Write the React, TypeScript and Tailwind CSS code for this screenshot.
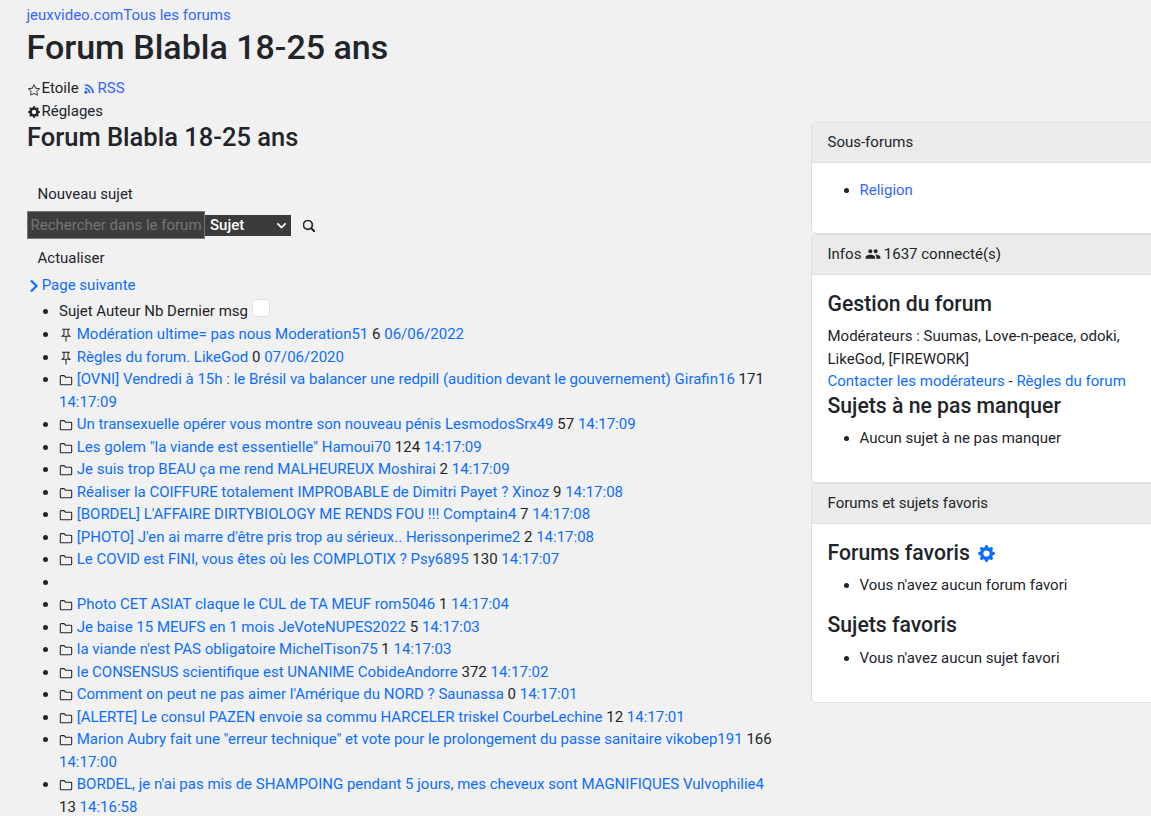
const BLUE = 'text-[#0d6efd]';

function Star() {
  return (
    <svg width="12" height="12" viewBox="0 0 16 16" fill="currentColor" className="inline-block align-[-3px] mx-[1.5px]">
      <path d="M2.866 14.85c-.078.444.36.791.746.593l4.39-2.256 4.389 2.256c.386.198.824-.149.746-.592l-.83-4.73 3.522-3.356c.33-.314.16-.888-.282-.95l-4.898-.696L8.465.792a.513.513 0 0 0-.927 0L5.354 5.12l-4.898.696c-.441.062-.612.636-.283.95l3.523 3.356-.83 4.73zm4.905-2.767-3.686 1.894.694-3.957a.565.565 0 0 0-.163-.505L1.71 6.745l4.052-.576a.525.525 0 0 0 .393-.288L8 2.223l1.847 3.658a.525.525 0 0 0 .393.288l4.052.575-2.906 2.77a.565.565 0 0 0-.163.506l.694 3.957-3.686-1.894a.503.503 0 0 0-.461 0z" />
    </svg>
  );
}

function Gear({ size = 12, cls = 'mx-[1.5px] align-[-2px]' }: { size?: number; cls?: string }) {
  return (
    <svg width={size} height={size} viewBox="0 0 16 16" fill="currentColor" className={`inline-block ${cls}`}>
      <path d="M9.405 1.05c-.413-1.4-2.397-1.4-2.81 0l-.1.34a1.464 1.464 0 0 1-2.105.872l-.31-.17c-1.283-.698-2.686.705-1.987 1.987l.169.311c.446.82.023 1.841-.872 2.105l-.34.1c-1.4.413-1.4 2.397 0 2.81l.34.1a1.464 1.464 0 0 1 .872 2.105l-.17.31c-.698 1.283.705 2.686 1.987 1.987l.311-.169a1.464 1.464 0 0 1 2.105.872l.1.34c.413 1.4 2.397 1.4 2.81 0l.1-.34a1.464 1.464 0 0 1 2.105-.872l.31.17c1.283.698 2.686-.705 1.987-1.987l-.169-.311a1.464 1.464 0 0 1 .872-2.105l.34-.1c1.4-.413 1.4-2.397 0-2.81l-.34-.1a1.464 1.464 0 0 1-.872-2.105l.17-.31c.698-1.283-.705-2.686-1.987-1.987l-.311.169a1.464 1.464 0 0 1-2.105-.872l-.1-.34zM8 10.93a2.929 2.929 0 1 1 0-5.86 2.929 2.929 0 0 1 0 5.858z" />
    </svg>
  );
}

function Rss() {
  return (
    <svg width="10" height="10" viewBox="0 0 16 16" fill="none" stroke="currentColor" strokeWidth="2.8" className="inline-block align-[-1.5px] ml-[1.5px]">
      <path d="M1.500 7a7.500 7.500 0 0 1 7.500 7.500" />
      <path d="M1.500 1.500a13 13 0 0 1 13 13" />
      <circle cx="3" cy="13" r="2.500" fill="currentColor" stroke="none" />
    </svg>
  );
}

function Folder() {
  return (
    <svg width="14" height="14" viewBox="0 0 16 16" fill="none" stroke="currentColor" strokeWidth="1.2" className="inline-block align-[-3px] text-[#212529]">
      <path d="M1.500 4a1 1 0 0 1 1-1h3.300l1.600 1.800h6.100a1 1 0 0 1 1 1v6.700a1 1 0 0 1-1 1H2.500a1 1 0 0 1-1-1z" />
    </svg>
  );
}

function Pin() {
  return (
    <svg width="14" height="14" viewBox="0 0 16 16" fill="none" stroke="currentColor" strokeWidth="1.200" className="inline-block align-[-3px] text-[#212529]">
      <path d="M3.500 1.500h9M5.700 1.500v6L3.500 9.500h9l-2.200-2v-6M8 9.500v6" />
    </svg>
  );
}

function Search() {
  return (
    <svg width="12" height="12" viewBox="0 0 16 16" fill="currentColor" className="inline-block text-[#212529]">
      <path d="M11.742 10.344a6.500 6.500 0 1 0-1.397 1.398h-.001c.030.040.062.078.098.115l3.850 3.850a1 1 0 0 0 1.415-1.414l-3.850-3.850a1.007 1.007 0 0 0-.115-.100zM12 6.500a5.500 5.500 0 1 1-11 0 5.500 5.500 0 0 1 11 0z" stroke="currentColor" strokeWidth="1.300" />
    </svg>
  );
}

function People() {
  return (
    <svg width="16" height="16" viewBox="0 0 24 24" fill="currentColor" className="inline-block align-[-3px] mr-[-1px]">
      <path d="M16 11c1.660 0 2.990-1.340 2.990-3S17.660 5 16 5c-1.660 0-3 1.340-3 3s1.340 3 3 3zm-8 0c1.660 0 2.990-1.340 2.990-3S9.660 5 8 5C6.340 5 5 6.340 5 8s1.340 3 3 3zm0 2c-2.330 0-7 1.170-7 3.500V19h14v-2.500c0-2.330-4.670-3.500-7-3.500zm8 0c-.290 0-.620.020-.970.050 1.160.840 1.970 1.970 1.970 3.450V19h6v-2.500c0-2.330-4.670-3.500-7-3.500z" />
    </svg>
  );
}

function Chevron() {
  return (
    <svg width="10" height="14" viewBox="0 0 10 14" fill="none" stroke="currentColor" strokeWidth="2.200" className="inline-block align-[-3px]">
      <path d="M3 1.500 8.500 7 3 12.500" />
    </svg>
  );
}

type Topic = [string, string, string, string];

const topics: (Topic | null)[] = [
  ['[OVNI] Vendredi à 15h : le Brésil va balancer une redpill (audition devant le gouvernement)', 'Girafin16', '171', '14:17:09'],
  ['Un transexuelle opérer vous montre son nouveau pénis', 'LesmodosSrx49', '57', '14:17:09'],
  ['Les golem "la viande est essentielle"', 'Hamoui70', '124', '14:17:09'],
  ['Je suis trop BEAU ça me rend MALHEUREUX', 'Moshirai', '2', '14:17:09'],
  ['Réaliser la COIFFURE totalement IMPROBABLE de Dimitri Payet ?', 'Xinoz', '9', '14:17:08'],
  ['[BORDEL] L\'AFFAIRE DIRTYBIOLOGY ME RENDS FOU !!!', 'Comptain4', '7', '14:17:08'],
  ['[PHOTO] J\'en ai marre d\'être pris trop au sérieux..', 'Herissonperime2', '2', '14:17:08'],
  ['Le COVID est FINI, vous êtes où les COMPLOTIX ?', 'Psy6895', '130', '14:17:07'],
  null,
  ['Photo CET ASIAT claque le CUL de TA MEUF', 'rom5046', '1', '14:17:04'],
  ['Je baise 15 MEUFS en 1 mois', 'JeVoteNUPES2022', '5', '14:17:03'],
  ['la viande n\'est PAS obligatoire', 'MichelTison75', '1', '14:17:03'],
  ['le CONSENSUS scientifique est UNANIME', 'CobideAndorre', '372', '14:17:02'],
  ['Comment on peut ne pas aimer l\'Amérique du NORD ?', 'Saunassa', '0', '14:17:01'],
  ['[ALERTE] Le consul PAZEN envoie sa commu HARCELER triskel', 'CourbeLechine', '12', '14:17:01'],
  ['Marion Aubry fait une "erreur technique" et vote pour le prolongement du passe sanitaire', 'vikobep191', '166', '14:17:00'],
  ['BORDEL, je n\'ai pas mis de SHAMPOING pendant 5 jours, mes cheveux sont MAGNIFIQUES', 'Vulvophilie4', '13', '14:16:58'],
];

function Row({ icon, t }: { icon: React.ReactNode; t: Topic }) {
  return (
    <li>
      {icon} <a className={BLUE}>{t[0]}</a> <a className={BLUE}>{t[1]}</a> {t[2]} <a className={BLUE}>{t[3]}</a>
    </li>
  );
}

function Card({ title, children }: { title: React.ReactNode; children: React.ReactNode }) {
  return (
    <div className="bg-white border border-[#dfdfdf] rounded-[5px] overflow-hidden">
      <div className="h-[40px] px-[15.5px] flex items-center bg-[#ebebeb] border-b border-[#dfdfdf] text-[#212529]">
        <span>{title}</span>
      </div>
      <div className="px-[15.5px] pt-4 pb-[17px]">{children}</div>
    </div>
  );
}

export default function App() {
  return (
    <div className="h-[816px] w-[1151px] overflow-hidden bg-[#f1f1f1] text-[#212529] text-[15px] leading-[22.5px] font-['Roboto',sans-serif]">
      <div className="pl-[26.5px] pt-[4px]">
        <div className="text-[#3366ff]"><a>jeuxvideo.com</a><a>Tous les forums</a></div>
        <h1 className="text-[34px] leading-[40px] font-medium mb-[10px]">Forum Blabla 18-25 ans</h1>
        <div className="h-[23.500px]"><Star /><span>Etoile</span> <a className="text-[#3366ff]"><Rss /> RSS</a></div>
        <div className="h-[22.500px]"><Gear /><span>Réglages</span></div>
      </div>
      <div className="flex gap-[30px] pl-[27px]">
        <main className="w-[754px] shrink-0">
          <h2 className="text-[25.5px] leading-[29px] font-medium mb-[24px]">Forum Blabla 18-25 ans</h2>
          <div className="px-[10.5px] py-[7px] h-[35px]">Nouveau sujet</div>
          <div className="flex items-center h-[28px]">
            <input readOnly placeholder="Rechercher dans le forum" className="w-[178px] h-[28px] bg-[#3d3d3d] border border-[#767676] px-[2.5px] text-[15px] text-white placeholder:text-[#757575]" />
            <div className="w-[86px] h-[21px] bg-[#3b3b3b] text-white font-medium pl-[5px] flex items-center justify-between pr-[4px] mt-[1px]">
              <span>Sujet</span>
              <svg width="11" height="11" viewBox="0 0 16 16" fill="none" stroke="currentColor" strokeWidth="2.500"><path d="M2 5l6 6 6-6" /></svg>
            </div>
            <span className="ml-[12px] mt-[3px] flex"><Search /></span>
          </div>
          <div className="px-[10.5px] py-[8px] h-[35px]">Actualiser</div>
          <div className={`${BLUE} pl-[1px]`}><Chevron /> <a>Page suivante</a></div>
          <ul className="list-disc pl-[32px] mt-[1px]">
            <li className="h-[26px] pt-[1.5px]">
              Sujet Auteur Nb Dernier msg <span className="inline-block w-[18px] h-[18px] bg-white border border-[#dfdfdf] rounded-[4px] align-[-1px]" />
            </li>
            <Row icon={<Pin />} t={['Modération ultime= pas nous', 'Moderation51', '6', '06/06/2022']} />
            <Row icon={<Pin />} t={['Règles du forum.', 'LikeGod', '0', '07/06/2020']} />
            {topics.map((t, i) => t ? <Row key={i} icon={<Folder />} t={t} /> : <li key={i} className="h-[22.500px]" />)}
          </ul>
        </main>
        <aside className="w-[360px] shrink-0 -mt-[1px]">
          <Card title="Sous-forums">
            <ul className="list-disc pl-[32px] pb-[15px]">
              <li><a className="text-[#3366ff]">Religion</a></li>
            </ul>
          </Card>
          <Card title={<>Infos <People /> 1637 connecté(s)</>}>
            <h3 className="text-[21.2px] leading-[25px] font-medium mb-[9px]">Gestion du forum</h3>
            <p>Modérateurs : Suumas, Love-n-peace, odoki,<br />LikeGod, [FIREWORK]</p>
            <p><a className={BLUE}>Contacter les modérateurs</a> - <a className={BLUE}>Règles du forum</a></p>
            <h3 className="text-[21.2px] leading-[25px] font-medium mb-[9px]">Sujets à ne pas manquer</h3>
            <ul className="list-disc pl-[32px] pb-[16px]"><li>Aucun sujet à ne pas manquer</li></ul>
          </Card>
          <Card title="Forums et sujets favoris">
            <h3 className="text-[21.2px] leading-[25px] font-medium mb-[9px]">Forums favoris <span className={BLUE}><Gear size={17} cls="ml-[3px] align-[-2px]" /></span></h3>
            <ul className="list-disc pl-[32px] mb-[15px]"><li>Vous n'avez aucun forum favori</li></ul>
            <h3 className="text-[21.2px] leading-[25px] font-medium mb-[10px]">Sujets favoris</h3>
            <ul className="list-disc pl-[32px] pb-[16px]"><li>Vous n'avez aucun sujet favori</li></ul>
          </Card>
        </aside>
      </div>
    </div>
  );
}
